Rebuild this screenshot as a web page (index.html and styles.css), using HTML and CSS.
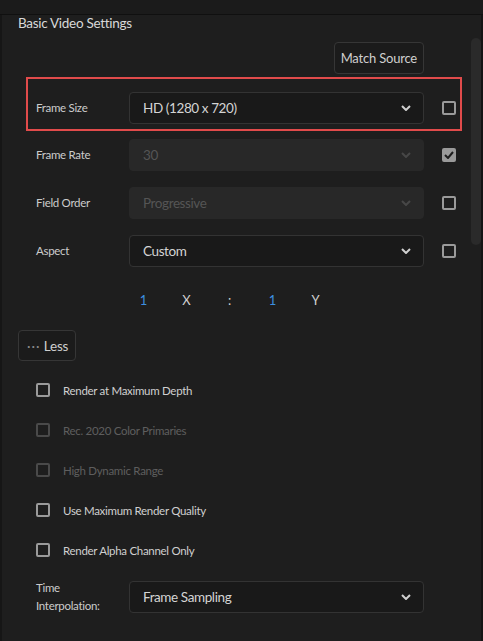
FILE: index.html
```html
<!DOCTYPE html>
<html lang="en">

<head>
    <meta charset="UTF-8">
    <meta name="viewport" content="width=device-width, initial-scale=1.0">
    <title>Basic Video Settings</title>
    <link rel="stylesheet" href="styles.css">
</head>

<body>
    <div class="topbar"></div>
    <div class="main">
        <div class="content">
            <h2 class="title">Basic Video Settings</h2>

            <div class="match-row">
                <button class="btn">Match Source</button>
            </div>

            <div class="row highlight">
                <span class="label">Frame Size</span>
                <div class="select">
                    <span>HD (1280 x 720)</span>
                    <svg class="chevron" width="10" height="6" viewBox="0 0 10 6"><path d="M1 1l4 4 4-4" /></svg>
                </div>
                <span class="check"></span>
            </div>

            <div class="row">
                <span class="label">Frame Rate</span>
                <div class="select disabled">
                    <span>30</span>
                    <svg class="chevron" width="10" height="6" viewBox="0 0 10 6"><path d="M1 1l4 4 4-4" /></svg>
                </div>
                <span class="check checked">
                    <svg width="10" height="8" viewBox="0 0 10 8"><path d="M1 4l3 3 5-6" /></svg>
                </span>
            </div>

            <div class="row">
                <span class="label">Field Order</span>
                <div class="select disabled">
                    <span>Progressive</span>
                    <svg class="chevron" width="10" height="6" viewBox="0 0 10 6"><path d="M1 1l4 4 4-4" /></svg>
                </div>
                <span class="check"></span>
            </div>

            <div class="row">
                <span class="label">Aspect</span>
                <div class="select">
                    <span>Custom</span>
                    <svg class="chevron" width="10" height="6" viewBox="0 0 10 6"><path d="M1 1l4 4 4-4" /></svg>
                </div>
                <span class="check"></span>
            </div>

            <div class="ratio">
                <span class="num">1</span>
                <span>X</span>
                <span>:</span>
                <span class="num">1</span>
                <span>Y</span>
            </div>

            <button class="btn less"><span class="dots">&middot;&middot;&middot;</span> Less</button>

            <ul class="options">
                <li><span class="check"></span>Render at Maximum Depth</li>
                <li class="off"><span class="check"></span>Rec. 2020 Color Primaries</li>
                <li class="off"><span class="check"></span>High Dynamic Range</li>
                <li><span class="check"></span>Use Maximum Render Quality</li>
                <li><span class="check"></span>Render Alpha Channel Only</li>
            </ul>

            <div class="row last">
                <span class="label">Time<br>Interpolation:</span>
                <div class="select">
                    <span>Frame Sampling</span>
                    <svg class="chevron" width="10" height="6" viewBox="0 0 10 6"><path d="M1 1l4 4 4-4" /></svg>
                </div>
            </div>
        </div>
        <div class="scroll">
            <div class="thumb"></div>
        </div>
    </div>
</body>

</html>
```

FILE: styles.css
```css
body {
    margin: 0;
    width: 483px;
    height: 641px;
    overflow: hidden;
    background-color: #1e1e1e;
    font-family: Lato, "Open Sans", sans-serif;
    color: #d4d4d4;
}

.topbar {
    height: 14px;
    background-color: #1b1b1b;
    border-bottom: 1px solid #101010;
}

.main {
    display: flex;
    height: 626px;
    border-left: 2px solid #161616;
    border-right: 2px solid #141414;
}

.content {
    flex: 1;
}

.title {
    margin: 0;
    padding: 1px 0 0 16px;
    height: 26px;
    line-height: 14px;
    font-size: 13.5px;
    letter-spacing: -0.3px;
    font-weight: normal;
    color: #d8d8d8;
}

.match-row {
    display: flex;
    justify-content: flex-end;
    padding-right: 45px;
}

.btn {
    font-family: inherit;
    font-size: 13px;
    letter-spacing: -0.2px;
    color: #cfcfcf;
    background-color: #1b1b1b;
    border: 1px solid #363636;
    border-radius: 4px;
    height: 32px;
    padding: 0 6px;
    cursor: pointer;
}

.row {
    display: flex;
    align-items: center;
    height: 32px;
    padding-left: 34px;
    margin-bottom: 16px;
}

.highlight {
    margin: 3px 0 8px 24px;
    width: 420px;
    padding: 13px 4px 5px 8px;
    border: 2px solid #e14b4b;
}

.label {
    flex-shrink: 0;
    width: 93px;
    font-size: 11.5px;
    letter-spacing: -0.3px;
    line-height: 18px;
    color: #cccccc;
}

.select {
    flex-shrink: 0;
    box-sizing: border-box;
    width: 295px;
    height: 32px;
    display: flex;
    align-items: center;
    justify-content: space-between;
    padding: 0 12px 0 13px;
    background-color: #191919;
    border: 1px solid #333;
    border-radius: 4px;
    font-size: 13.5px;
    letter-spacing: -0.4px;
    color: #d4d4d4;
}

.select.disabled {
    background-color: #282828;
    border-color: #282828;
    color: #555;
}

.chevron path {
    fill: none;
    stroke: #d0d0d0;
    stroke-width: 2;
}

.disabled .chevron path {
    stroke: #474747;
}

.check {
    flex-shrink: 0;
    box-sizing: border-box;
    width: 14px;
    height: 14px;
    border: 2px solid #9a9a9a;
    border-radius: 2px;
    margin-left: 18px;
    display: flex;
    align-items: center;
    justify-content: center;
}

.check.checked {
    background-color: #9a9a9a;
}

.check.checked path {
    fill: none;
    stroke: #1e1e1e;
    stroke-width: 2;
}

.ratio {
    display: flex;
    padding-left: 120px;
    margin-top: 25px;
    font-size: 13px;
    line-height: 16px;
    color: #d0d0d0;
}

.ratio span {
    width: 43px;
    text-align: center;
}

.ratio .num {
    color: #3d8fe0;
}

.less {
    margin: 22px 0 0 16px;
    height: 31px;
    padding: 0 7px 0 8px;
    font-size: 13.5px;
}

.dots {
    color: #8a8a8a;
    letter-spacing: 1px;
}

.options {
    list-style: none;
    margin: 9px 0 0 0;
    padding: 0 0 0 34px;
}

.options li {
    display: flex;
    align-items: center;
    height: 40px;
    font-size: 11.5px;
    letter-spacing: -0.3px;
    color: #d0d0d0;
}

.options .check {
    margin: 0 13px 0 0;
}

.options li.off {
    color: #5e5e5e;
}

.options li.off .check {
    border-color: #4a4a4a;
}

.row.last {
    margin-top: 11px;
}

.scroll {
    width: 12px;
    padding-top: 23px;
}

.thumb {
    width: 10px;
    height: 207px;
    margin-left: 2px;
    border-radius: 5px;
    background-color: #2a2a2a;
}
```
